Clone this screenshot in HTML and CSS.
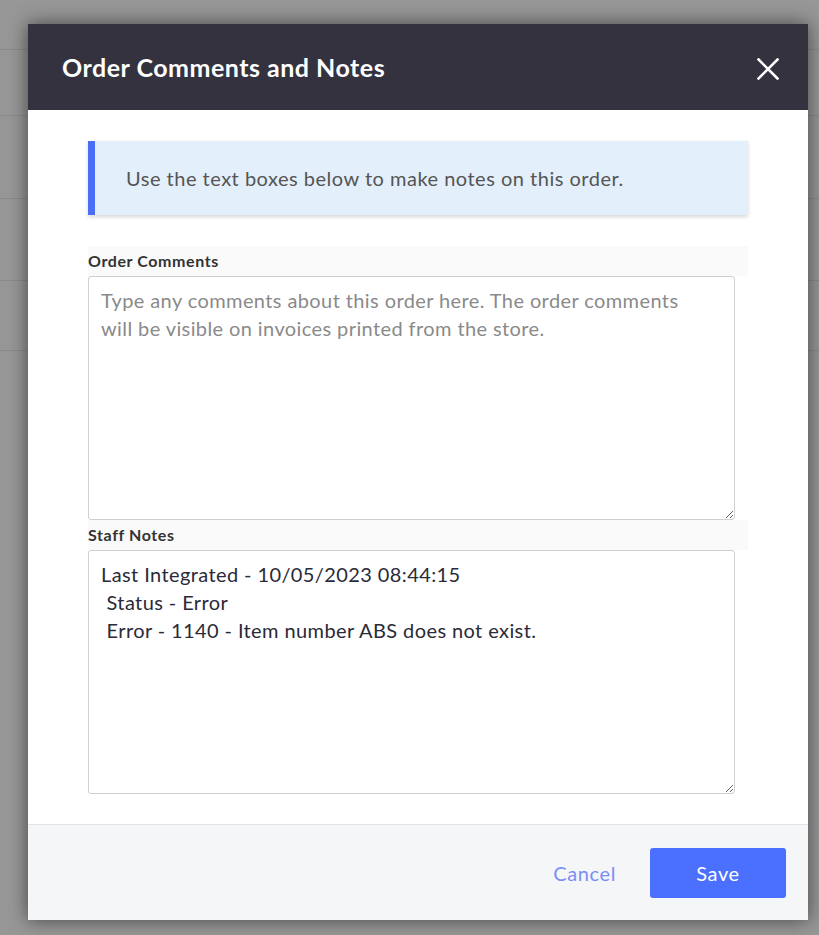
FILE: index.html
```html
<!DOCTYPE html>
<html>
<head>
<meta charset="utf-8">
<title>Order Comments and Notes</title>
<link rel="stylesheet" href="styles.css">
</head>
<body>

<div class="page">
<div class="pageRow r1"></div>
<div class="pageRow r2"></div>
<div class="pageRow r3"></div>
<div class="pageRow r4"></div>
<div class="pageRow r5"></div>
</div>

<div class="modal">
<div class="modalHeader">
<h2 class="modalTitle">Order Comments and Notes</h2>
<a href="#" class="modalClose"><svg width="22" height="22" viewBox="0 0 22 22"><path d="M1.5 1.5 L20.5 20.5 M20.5 1.5 L1.5 20.5" stroke="#fff" stroke-width="2.6" stroke-linecap="square"/></svg></a>
</div>

<div class="modalBody">
<div class="infoBox">Use the text boxes below to make notes on this order.</div>

<div class="fieldLabel">Order Comments</div>
<textarea class="noteBox" placeholder="Type any comments about this order here. The order comments will be visible on invoices printed from the store."></textarea>

<div class="fieldLabel">Staff Notes</div>
<textarea class="noteBox">Last Integrated - 10/05/2023 08:44:15
 Status - Error
 Error - 1140 - Item number ABS does not exist.</textarea>
</div>

<div class="modalFooter">
<a href="#" class="cancelLink">Cancel</a>
<a href="#" class="saveButton">Save</a>
</div>
</div>

</body>
</html>
```

FILE: styles.css
```css
body {margin:0; background-color:#979797; font-family:Lato, "Liberation Sans", sans-serif; height:935px; overflow:hidden;}

.page {padding:0;}
.pageRow {border-bottom:solid #8b8b8b 1px;}
.r1 {height:49px;}
.r2 {height:65px;}
.r3 {height:82px;}
.r4 {height:81px;}
.r5 {height:69px;}

.modal {position:absolute; left:28px; top:24px; width:780px; height:896px; background-color:#fff; box-shadow:0 0 18px rgba(0,0,0,0.55); display:flex; flex-direction:column;}

.modalHeader {height:86px; background-color:#34323f; display:flex; align-items:center; justify-content:space-between; padding:0 29px 0 34px; box-sizing:border-box;}
.modalTitle {margin:0; color:#fff; font-size:25px; font-weight:bold; letter-spacing:0.5px;}
.modalClose {display:flex; margin-top:4px;}

.modalBody {flex:1; padding:31px 60px 0 60px;}

.infoBox {background-color:#e3effa; border-left:solid #4b6ef6 7px; padding:0 31px; height:74px; display:flex; align-items:center; font-size:20px; letter-spacing:0.5px; color:#555; box-shadow:0 2px 4px rgba(0,0,0,0.16); margin-bottom:31px;}

.fieldLabel {background-color:#fafafa; height:30px; line-height:30px; font-size:16px; font-weight:bold; letter-spacing:0.6px; color:#333;}

.noteBox {display:block; width:98%; height:244px; box-sizing:border-box; margin:0; border:solid #cfcfcf 1px; border-radius:3px; padding:9px 26px 9px 12px; font-family:Lato, "Liberation Sans", sans-serif; font-size:20px; letter-spacing:0.4px; line-height:28px; color:#2b2a38; resize:vertical; outline:none;}
.noteBox::placeholder {color:#8a8a8a;}

.modalFooter {height:96px; box-sizing:border-box; border-top:solid #e1e4e8 1px; background-color:#f5f6f8; display:flex; align-items:center; justify-content:flex-end; padding:0 22px 0 0; gap:34px;}
.cancelLink {font-size:20px; letter-spacing:0.6px; color:#7b8ef6; text-decoration:none;}
.saveButton {width:136px; height:50px; border-radius:3px; background-color:#4b70ff; color:#fff; font-size:20px; letter-spacing:0.6px; text-decoration:none; display:flex; align-items:center; justify-content:center;}
```
